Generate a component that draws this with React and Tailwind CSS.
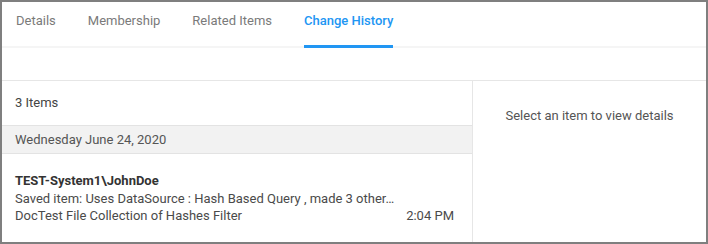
import { useState } from 'react';

const tabs = ['Details', 'Membership', 'Related Items', 'Change History'];

const App = () => {
  const [active, setActive] = useState('Change History');

  return (
    <div className="w-[708px] h-[244px] border-2 border-[#7f7f7f] bg-white flex flex-col font-['Roboto',sans-serif] text-[13px]">
      {/* tabs */}
      <div className="h-[44px] flex items-stretch gap-[32px] pl-[14px] shrink-0">
        {tabs.map((tab) => (
          <button
            key={tab}
            onClick={() => setActive(tab)}
            className={`relative flex items-center pb-[6px] ${tab === active ? 'text-[#2196f3] font-medium' : 'text-[#7a7a7a]'}`}
          >
            {tab}
            {tab === active && (
              <span className="absolute left-0 right-0 bottom-[-2px] h-[3px] bg-[#2196f3]"></span>
            )}
          </button>
        ))}
      </div>
      <div className="h-[2px] bg-[#f5f5f5] shrink-0"></div>
      <div className="h-[33px] border-b border-[#e6e6e6] shrink-0"></div>

      {/* content */}
      <div className="flex flex-1 min-h-0">
        <div className="w-[471px] border-r border-[#e6e6e6] flex flex-col shrink-0">
          <div className="h-[44px] flex items-center pl-[13px] text-[#444]">3 Items</div>
          <div className="h-[29px] flex items-center pl-[13px] bg-[#f2f2f2] border-y border-[#e3e3e3] text-[#555]">
            Wednesday June 24, 2020
          </div>
          <div className="pt-[18px] pl-[13px] pr-[18px] leading-[17.5px] text-[#4a4a4a]">
            <div className="font-bold text-[#333]">TEST-System1\JohnDoe</div>
            <div>Saved item: Uses DataSource : Hash Based Query , made 3 other…</div>
            <div className="flex justify-between">
              <span>DocTest File Collection of Hashes Filter</span>
              <span>2:04 PM</span>
            </div>
          </div>
        </div>
        <div className="flex-1 flex justify-center pt-[26px] text-[#555]">
          <span className="leading-[18px]">Select an item to view details</span>
        </div>
      </div>
    </div>
  );
};

export default App;
